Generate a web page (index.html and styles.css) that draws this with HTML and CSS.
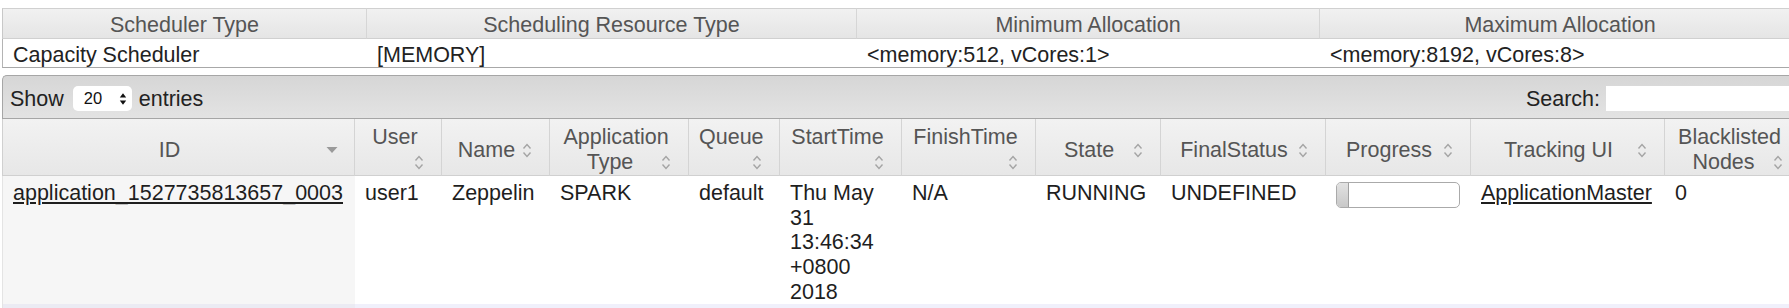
FILE: index.html
```html
<!DOCTYPE html>
<html>
<head>
<meta charset="utf-8">
<title>Applications</title>
<link rel="stylesheet" href="styles.css">
</head>
<body>
<table class="info">
  <thead>
    <tr>
      <th class="i1">Scheduler Type</th>
      <th class="i2">Scheduling Resource Type</th>
      <th class="i3">Minimum Allocation</th>
      <th class="i4">Maximum Allocation</th>
    </tr>
  </thead>
  <tbody>
    <tr>
      <td class="first">Capacity Scheduler</td>
      <td>[MEMORY]</td>
      <td>&lt;memory:512, vCores:1&gt;</td>
      <td>&lt;memory:8192, vCores:8&gt;</td>
    </tr>
  </tbody>
</table>

<div class="apps">
  <div class="toolbar">
    <div class="length">Show <span class="select"><span>20</span><svg width="8" height="14" viewBox="0 0 8 14"><path d="M0.8 5.6 L4 1.2 L7.2 5.6 Z M0.8 8.4 L4 12.8 L7.2 8.4 Z" fill="#111"/></svg></span> entries</div>
    <div class="filter">Search: <span class="search"></span></div>
  </div>
  <table class="grid">
    <thead>
      <tr>
        <th class="w-id first">ID<span class="si"><svg width="12" height="8" viewBox="0 0 12 8"><path d="M0.5 1 L11.5 1 L6 7 Z" fill="#9a9a9a"/></svg></span></th>
        <th class="w-user">User<span class="si blk"><svg width="10" height="17" viewBox="0 0 10 17"><path d="M1.5 6.5 L5 2.5 L8.5 6.5 M1.5 10.5 L5 14.5 L8.5 10.5" fill="none" stroke="#a4a4a4" stroke-width="1.4"/></svg></span></th>
        <th class="w-name">Name<span class="si"><svg width="10" height="17" viewBox="0 0 10 17"><path d="M1.5 6.5 L5 2.5 L8.5 6.5 M1.5 10.5 L5 14.5 L8.5 10.5" fill="none" stroke="#a4a4a4" stroke-width="1.4"/></svg></span></th>
        <th class="w-type">Application Type<span class="si"><svg width="10" height="17" viewBox="0 0 10 17"><path d="M1.5 6.5 L5 2.5 L8.5 6.5 M1.5 10.5 L5 14.5 L8.5 10.5" fill="none" stroke="#a4a4a4" stroke-width="1.4"/></svg></span></th>
        <th class="w-queue">Queue<span class="si blk"><svg width="10" height="17" viewBox="0 0 10 17"><path d="M1.5 6.5 L5 2.5 L8.5 6.5 M1.5 10.5 L5 14.5 L8.5 10.5" fill="none" stroke="#a4a4a4" stroke-width="1.4"/></svg></span></th>
        <th class="w-start">StartTime<span class="si blk"><svg width="10" height="17" viewBox="0 0 10 17"><path d="M1.5 6.5 L5 2.5 L8.5 6.5 M1.5 10.5 L5 14.5 L8.5 10.5" fill="none" stroke="#a4a4a4" stroke-width="1.4"/></svg></span></th>
        <th class="w-finish">FinishTime<span class="si blk"><svg width="10" height="17" viewBox="0 0 10 17"><path d="M1.5 6.5 L5 2.5 L8.5 6.5 M1.5 10.5 L5 14.5 L8.5 10.5" fill="none" stroke="#a4a4a4" stroke-width="1.4"/></svg></span></th>
        <th class="w-state">State<span class="si"><svg width="10" height="17" viewBox="0 0 10 17"><path d="M1.5 6.5 L5 2.5 L8.5 6.5 M1.5 10.5 L5 14.5 L8.5 10.5" fill="none" stroke="#a4a4a4" stroke-width="1.4"/></svg></span></th>
        <th class="w-final">FinalStatus<span class="si"><svg width="10" height="17" viewBox="0 0 10 17"><path d="M1.5 6.5 L5 2.5 L8.5 6.5 M1.5 10.5 L5 14.5 L8.5 10.5" fill="none" stroke="#a4a4a4" stroke-width="1.4"/></svg></span></th>
        <th class="w-prog">Progress<span class="si"><svg width="10" height="17" viewBox="0 0 10 17"><path d="M1.5 6.5 L5 2.5 L8.5 6.5 M1.5 10.5 L5 14.5 L8.5 10.5" fill="none" stroke="#a4a4a4" stroke-width="1.4"/></svg></span></th>
        <th class="w-track">Tracking UI<span class="si"><svg width="10" height="17" viewBox="0 0 10 17"><path d="M1.5 6.5 L5 2.5 L8.5 6.5 M1.5 10.5 L5 14.5 L8.5 10.5" fill="none" stroke="#a4a4a4" stroke-width="1.4"/></svg></span></th>
        <th class="w-black">Blacklisted Nodes<span class="si"><svg width="10" height="17" viewBox="0 0 10 17"><path d="M1.5 6.5 L5 2.5 L8.5 6.5 M1.5 10.5 L5 14.5 L8.5 10.5" fill="none" stroke="#a4a4a4" stroke-width="1.4"/></svg></span></th>
      </tr>
    </thead>
    <tbody>
      <tr class="even">
        <td class="sorted first"><a href="#">application_1527735813657_0003</a></td>
        <td>user1</td>
        <td>Zeppelin</td>
        <td>SPARK</td>
        <td>default</td>
        <td>Thu May 31 13:46:34 +0800 2018</td>
        <td>N/A</td>
        <td>RUNNING</td>
        <td>UNDEFINED</td>
        <td><div class="pb"><div class="pb-val"></div></div></td>
        <td><a href="#">ApplicationMaster</a></td>
        <td>0</td>
      </tr>
      <tr class="odd">
        <td class="sorted first"></td>
        <td></td><td></td><td></td><td></td><td></td><td></td><td></td><td></td><td></td><td></td><td></td>
      </tr>
    </tbody>
  </table>
</div>
</body>
</html>
```

FILE: styles.css
```css
html, body {
  margin: 0;
  overflow: hidden;
  background: #fff;
}

body {
  padding: 8px 0 0 2px;
  font-family: "Liberation Sans", Arial, Helvetica, sans-serif;
  font-size: 21.5px;
  line-height: 1.15;
  color: #222;
}

table {
  border-collapse: separate;
  border-spacing: 0;
  table-layout: fixed;
  width: 1799px;
}

th, td {
  box-sizing: border-box;
}

/* ---------- scheduler info table ---------- */
.info th {
  font-weight: normal;
  color: #555;
  text-align: center;
  padding: 4px 10px 0;
  background: linear-gradient(#f1f1f1, #e5e5e5);
  border-top: 1px solid #d0d0d0;
  border-bottom: 1px solid #d0d0d0;
  border-right: 1px solid #d6d6d6;
}

.info th.i1 { width: 365px; border-left: 1px solid #c8c8c8; }
.info th.i2 { width: 490px; }
.info th.i3 { width: 463px; }
.info th.i4 { width: 481px; }

.info td {
  padding: 4px 10px 0;
  text-align: left;
  border-bottom: 1px solid #a8a8a8;
  background: #fff;
}

.info td.first {
  border-left: 1px solid #b4b4b4;
}

/* ---------- applications ---------- */
.apps {
  margin-top: 7px;
  width: max-content;
  display: flex;
  flex-direction: column;
}

.toolbar {
  display: flex;
  align-items: center;
  justify-content: space-between;
  box-sizing: border-box;
  height: 44px;
  padding: 3px 9px 0 7px;
  border-top: 1px solid #a6a6a6;
  border-left: 1px solid #a6a6a6;
  border-bottom: 1px solid #a6a6a6;
  border-top-left-radius: 5px;
  background: linear-gradient(#d6d6d6, #e3e3e3);
  color: #222;
}

.length, .filter {
  display: flex;
  align-items: center;
}

.select {
  display: inline-flex;
  align-items: center;
  justify-content: space-between;
  box-sizing: border-box;
  width: 59px;
  height: 25px;
  margin: 0 7px 0 9px;
  padding: 0 5px 0 11px;
  background: #fff;
  border-radius: 5px;
  font-size: 16.5px;
  color: #111;
}

.search {
  display: inline-block;
  width: 186px;
  height: 25px;
  margin-left: 6px;
  background: #fff;
}

.grid th {
  font-weight: normal;
  color: #555;
  text-align: center;
  vertical-align: middle;
  padding: 6px 16px 0 10px;
  background: linear-gradient(#f2f2f2, #e7e7e7);
  border-right: 1px solid #d4d4d4;
  border-bottom: 1px solid #d0d0d0;
}

.grid th.first { border-left: 1px solid #d0d0d0; }

.w-id { width: 353px; }
.w-user { width: 87px; }
.w-name { width: 108px; }
.w-type { width: 139px; }
.w-queue { width: 91px; }
.w-start { width: 122px; }
.w-finish { width: 134px; }
.w-state { width: 125px; }
.w-final { width: 165px; }
.w-prog { width: 145px; }
.w-track { width: 194px; }
.w-black { width: 136px; }

.si {
  float: right;
  width: 12px;
  height: 1.15em;
  display: flex;
  align-items: center;
  justify-content: center;
}

.si.blk {
  float: none;
  margin-left: auto;
}

.grid td {
  padding: 5px 10px 0;
  vertical-align: top;
  text-align: left;
  color: #1e1e1e;
}

.grid tr.even td { background: #fff; }
.grid tr.even td.sorted { background: #f6f6f6; }
.grid tr.odd td { background: #f0f0fb; height: 40px; }
.grid tr.odd td.sorted { background: #ebebf3; }

.grid td.first { border-left: 1px solid #e4e4e4; }

.grid a {
  color: #1e1e1e;
  text-decoration: underline;
}

.pb {
  box-sizing: border-box;
  width: 124px;
  height: 26px;
  margin-top: 1px;
  border: 1px solid #aaa;
  border-radius: 5px;
  background: #fff;
  overflow: hidden;
  display: flex;
}

.pb-val {
  width: 11px;
  background: linear-gradient(#e2e2e2, #c8c8c8);
  border-right: 1px solid #a0a0a0;
}
```
